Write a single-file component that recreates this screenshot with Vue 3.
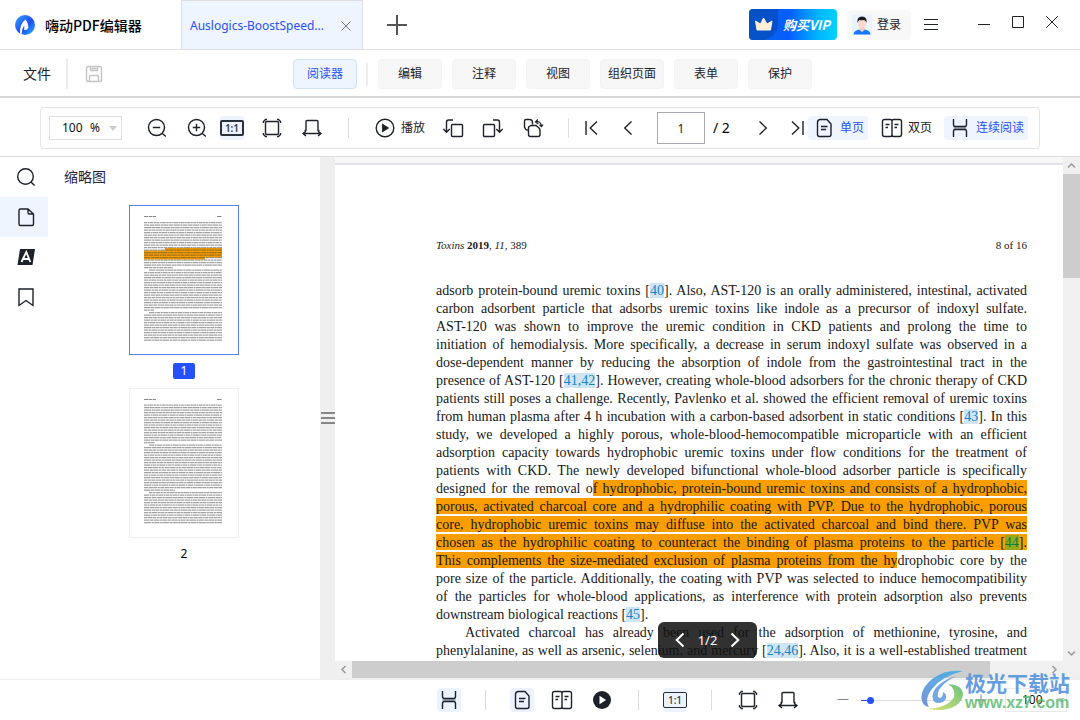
<script setup>
import { h, ref } from 'vue'

const icons = {
  zoomOut: '<circle cx="11.5" cy="11.5" r="8"/><path d="M7.8 11.5h7.4M17.4 17.4l3.4 3.2"/>',
  zoomIn: '<circle cx="11.5" cy="11.5" r="8"/><path d="M7.8 11.5h7.4M11.5 7.8v7.4M17.4 17.4l3.4 3.2"/>',
  search: '<circle cx="11.5" cy="11.5" r="7.8"/><path d="M17.2 17.2l3.4 3.4"/>',
  fitPage: '<rect x="5.5" y="5.5" width="13" height="13" rx="1.5"/><path d="M3.500 7V5.500L5.500 3.500H7M17 3.500h1.500l2 2V7M20.500 17v1.500l-2 2H17M7 20.500H5.500l-2-2V17"/>',
  fitWidth: '<path d="M4.500 14.500H5.500Q6 14.500 6 14V5.500Q6 4.500 7 4.500h10Q18 4.500 18 5.500V14Q18 14.500 18.500 14.500H19.500"/><path d="M3 17.500h18M6 15.200L3 17.500l3 2.500M18 15.200l3 2.300-3 2.500"/>',
  play: '<circle cx="12" cy="12" r="8.800"/><path d="M9.800 8.800v6.400l5.200-3.200z" fill="currentColor"/>',
  playSolid: '<circle cx="12" cy="12" r="9" fill="currentColor" stroke="none"/><path d="M10.200 9v6l4.600-3z" fill="#fff" stroke="#fff"/>',
  rotateLeft: '<rect x="10.500" y="8.500" width="11" height="12" rx="1"/><path d="M12 4H7.500Q5.500 4 5.500 6.500V16M2.300 13l3.200 3.200L8.700 13"/>',
  rotateRight: '<rect x="2.500" y="8.500" width="11" height="12" rx="1"/><path d="M12 4h4.500q2 0 2 2.500V16M15.300 13l3.200 3.200 3.200-3.200"/>',
  rotateAll: '<path d="M7 14H6Q5 14 4.500 13L3.500 11V5Q3.500 3.500 5 3.500H8.500Q11.500 3.500 11.500 6.500V8.500"/><path d="M7.500 14V11.500Q7.500 10.500 8.500 10.500L10 9.500h5l3 2.500q1 1 1 2.500v4q0 2-2 2h-7.500q-2 0-2-2z"/><path d="M14.500 6q5.500-1.500 6 4.500M16.800 3.500L14.500 6l2.800 2M18.500 8.800l2 1.900 1.600-2.200" stroke-width="1.200"/>',
  first: '<path d="M6 5v14M17 5.500L10.200 12l6.800 6.500"/>',
  prev: '<path d="M15.500 5.500L8.700 12l6.800 6.500"/>',
  next: '<path d="M8.500 5.500l6.800 6.500-6.800 6.500"/>',
  last: '<path d="M7 5.500l6.800 6.500L7 18.500M18 5v14"/>',
  single: '<path d="M8.500 3.500H15l4 4.500v10.500q0 2-2 2H7.500q-2 0-2-2v-12q0-3 3-3zM9 10.500h6.500M9 13.500h5"/>',
  double: '<path d="M12 5.500Q12 3.500 10.500 3.500H4.500q-2 0-2 2v13q0 2 2 2h6Q12 20.500 12 18.500zM12 5.500Q12 3.500 13.500 3.500h6q2 0 2 2v13q0 2-2 2h-6Q12 20.500 12 18.500M5.500 8.500h4M5.500 11.500h2.500M14.500 8.500h4M14.500 11.500h2.500"/>',
  continuous: '<path d="M5.500 11h13v2h-13z" fill="currentColor" stroke="none" opacity=".35"/><path d="M5.500 3v5.500Q5.500 10.500 7.500 10.500h9q2 0 2-2V3M5.500 21v-5.500Q5.500 13.500 7.500 13.500h9q2 0 2 2V21"/>',
  page: '<path d="M6.500 4H14l5.500 5v10q0 1.500-1.500 1.500H6.500Q5 20.500 5 19V5.500Q5 4 6.500 4zM14 4v3.500Q14 9 15.500 9h4"/>',
  letter: '<path d="M6 4h15l-2.500 16H3.500z" fill="currentColor" stroke="none"/><path d="M7.500 17L12.300 7l4 10M9.300 14h6" stroke="#fff" stroke-width="1.800"/>',
  bookmark: '<path d="M5 4h14v16.500l-7-5-7 5z"/>',
  minus: '<path d="M6.500 11.500h11"/>',
  plus: '<path d="M6.500 12h11M12 6.500v11"/>',
  menu: '<path d="M5 6.500h14M5 11.500h14M5 16.500h14" stroke-width="1.200"/>',
  save: '<rect x="4.500" y="4.500" width="15" height="15" rx="1.500"/><path d="M8.500 4.500v4h7v-4M7.500 19.500v-5q0-1 1-1h7q1 0 1 1v5M9.500 6.500h5"/>'
}
const Icon = (props) => h('svg', {
  class: 'icon', viewBox: '0 0 24 24', 'aria-hidden': 'true', innerHTML: icons[props.name]
})
Icon.props = ['name']

const ribbon = ['编辑', '注释', '视图', '组织页面', '表单', '保护']
const zoom = ref('100')
const page = ref('1')
const slider = ref(6)

// "~" switches the highlighter on or off, "[n]" is a citation
const source = [
  'adsorb protein-bound uremic toxins [40]. Also, AST-120 is an orally administered, intestinal, activated',
  'carbon adsorbent particle that adsorbs uremic toxins like indole as a precursor of indoxyl sulfate.',
  'AST-120 was shown to improve the uremic condition in CKD patients and prolong the time to',
  'initiation of hemodialysis. More specifically, a decrease in serum indoxyl sulfate was observed in a',
  'dose-dependent manner by reducing the absorption of indole from the gastrointestinal tract in the',
  'presence of AST-120 [41,42]. However, creating whole-blood adsorbers for the chronic therapy of CKD',
  'patients still poses a challenge. Recently, Pavlenko et al. showed the efficient removal of uremic toxins',
  'from human plasma after 4 h incubation with a carbon-based adsorbent in static conditions [43]. In this',
  'study, we developed a highly porous, whole-blood-hemocompatible microparticle with an efficient',
  'adsorption capacity towards hydrophobic uremic toxins under flow conditions for the treatment of',
  'patients with CKD. The newly developed bifunctional whole-blood adsorber particle is specifically',
  'designed for the removal o~f hydrophobic, protein-bound uremic toxins and consists of a hydrophobic,',
  '~porous, activated charcoal core and a hydrophilic coating with PVP. Due to the hydrophobic, porous',
  '~core, hydrophobic uremic toxins may diffuse into the activated charcoal and bind there. PVP was',
  '~chosen as the hydrophilic coating to counteract the binding of plasma proteins to the particle [44].',
  '~This complements the size-mediated exclusion of plasma proteins from the hy~drophobic core by the',
  'pore size of the particle. Additionally, the coating with PVP was selected to induce hemocompatibility',
  'of the particles for whole-blood applications, as interference with protein adsorption also prevents',
  'downstream biological reactions [45].',
  'Activated charcoal has already been used for the adsorption of methionine, tyrosine, and',
  'phenylalanine, as well as arsenic, selenium, and mercury [24,46]. Also, it is a well-established treatment'
]
const lines = source.map((text, i) => ({
  end: i === 18,
  indent: i === 19,
  runs: text.split('~').map((run, k) => ({
    marked: k % 2 === 1,
    bits: run.split(/(\d+(?:,\d+)?(?=\]))/).map((t, n) => ({ t, cite: n % 2 === 1 }))
  }))
}))

// Miniature pages: one dashed stroke per line of text
const makeRows = (count, start, shortRows, indents) => Array.from({ length: count }, (_, i) => ({
  y: start + i * 2.5,
  x1: indents.includes(i) ? 19 : 14,
  x2: shortRows[i] || 92,
  dash: `${3 + (i * 7) % 5} .5 ${1.5 + (i * 3) % 4} .4 ${4 + (i * 5) % 3} .5 2 .4`
}))
const thumbs = [
  { n: 1, active: true, rows: makeRows(48, 16.7, { 18: 43, 35: 24 }, [19, 36]) },
  { n: 2, active: false, rows: makeRows(48, 16.2, { 15: 25, 34: 45 }, [16, 35]) }
]
</script>

<template>
  <div class="app">
    <header class="titlebar">
      <div class="brand">
        <svg class="logo" viewBox="0 0 20 20" aria-hidden="true">
          <defs><linearGradient id="brandFill" x1="0" y1="0" x2="1" y2="1"><stop offset="0" stop-color="#36a5ff" /><stop offset=".55" stop-color="#1d4ff5" /><stop offset="1" stop-color="#20b8ff" /></linearGradient></defs>
          <circle cx="10" cy="10" r="10" fill="url(#brandFill)" />
          <path d="M5 18.500Q4.500 9 10.500 4.500Q13.500 8 13.500 12.500Q12.500 15.500 9 15Q9.500 12.500 9.200 10.500Q6.500 14 6.500 19.200z" fill="#fff" />
        </svg>
        <span>嗨动PDF编辑器</span>
      </div>
      <div class="filetab">
        <span>Auslogics-BoostSpeed...</span>
        <button class="bare close" aria-label="关闭标签"><svg viewBox="0 0 10 10"><path d="M.5.500l9 9M9.500.500l-9 9" /></svg></button>
      </div>
      <button class="bare newtab" aria-label="新建"><svg viewBox="0 0 20 20"><path d="M10 0v20M0 10h20" /></svg></button>
      <div class="account">
        <button class="vip">
          <svg class="crown" viewBox="0 0 30 31" aria-hidden="true">
            <path d="M0 0h29v17Q27 28 15 31H0z" fill="#0647ba" opacity=".65" />
            <path d="M6.500 12l5 3 3-6 3.500 6 5-3-1.500 9H8z" fill="#fff0d8" stroke="#fff0d8" stroke-linejoin="round" />
          </svg>
          <span>购买VIP</span>
        </button>
        <button class="login">
          <svg class="avatar" viewBox="0 0 20 20" aria-hidden="true">
            <rect width="20" height="20" fill="#eaf2ff" />
            <path d="M1.500 19.500q0-4 6-5h5q6 1 6 5z" fill="#1677ff" /><path d="M7.500 12h5v3l-2.500 2-2.500-2z" fill="#f7cdbb" />
            <ellipse cx="10" cy="8.500" rx="4" ry="5" fill="#fbd9ca" /><path d="M5.500 8Q4.500 1.500 10 1.500T14.500 8q-1-3-2.500-3-3 .5-4.500 0Q6.200 5.500 5.500 8z" fill="#1c1c22" />
          </svg>
          <span>登录</span>
        </button>
        <button class="bare" aria-label="菜单"><Icon name="menu" /></button>
      </div>
      <div class="window-buttons">
        <button class="bare" aria-label="最小化"><svg viewBox="0 0 12 12"><path d="M0 8.500h12" /></svg></button>
        <button class="bare" aria-label="最大化"><svg viewBox="0 0 12 12"><path d="M.5.500h11v11H.5z" /></svg></button>
        <button class="bare" aria-label="关闭"><svg viewBox="0 0 12 12"><path d="M.3.300l11.400 11.400M11.700.300L.3 11.700" /></svg></button>
      </div>
    </header>

    <nav class="ribbon">
      <button class="bare file">文件</button>
      <i class="rule tall"></i>
      <button class="bare save" aria-label="保存"><Icon name="save" /></button>
      <button class="tab current">阅读器</button>
      <i class="rule"></i>
      <button v-for="name in ribbon" :key="name" class="tab">{{ name }}</button>
    </nav>

    <div class="toolband">
      <div class="toolbar">
        <div class="zoombox">
          <input v-model="zoom" aria-label="缩放比例"><span>%</span><i class="caret"></i>
        </div>
        <div class="group zooms">
          <button class="bare tool" aria-label="缩小"><Icon name="zoomOut" /></button>
          <button class="bare tool" aria-label="放大"><Icon name="zoomIn" /></button>
        </div>
        <div class="group fits">
          <button class="bare tool lit" aria-label="实际大小"><span class="ratio">1:1</span></button>
          <button class="bare tool" aria-label="适合页面"><Icon name="fitPage" /></button>
          <button class="bare tool" aria-label="适合宽度"><Icon name="fitWidth" /></button>
        </div>
        <i class="sep"></i>
        <button class="bare labelled"><Icon name="play" /><span>播放</span></button>
        <div class="group turns">
          <button class="bare tool" aria-label="向左旋转"><Icon name="rotateLeft" /></button>
          <button class="bare tool" aria-label="向右旋转"><Icon name="rotateRight" /></button>
          <button class="bare tool" aria-label="旋转全部"><Icon name="rotateAll" /></button>
        </div>
        <i class="sep"></i>
        <div class="group pager">
          <button class="bare tool" aria-label="第一页"><Icon name="first" /></button>
          <button class="bare tool" aria-label="上一页"><Icon name="prev" /></button>
        </div>
        <input v-model="page" class="pagebox" aria-label="页码">
        <span class="total">/ 2</span>
        <div class="group pager forward">
          <button class="bare tool" aria-label="下一页"><Icon name="next" /></button>
          <button class="bare tool" aria-label="最后一页"><Icon name="last" /></button>
        </div>
        <button class="bare mode on"><Icon name="single" /><span>单页</span></button>
        <button class="bare mode"><Icon name="double" /><span>双页</span></button>
        <button class="bare mode on"><Icon name="continuous" /><span>连续阅读</span></button>
      </div>
    </div>

    <main class="work">
      <nav class="rail">
        <button class="bare" aria-label="搜索"><Icon name="search" /></button>
        <button class="bare chosen" aria-label="缩略图"><Icon name="page" /></button>
        <button class="bare" aria-label="注释列表"><Icon name="letter" /></button>
        <button class="bare" aria-label="书签"><Icon name="bookmark" /></button>
      </nav>
      <aside class="thumbs">
        <h2>缩略图</h2>
        <button v-for="t in thumbs" :key="t.n" class="bare thumb" :class="{ active: t.active }">
          <svg viewBox="0 0 108 148" aria-hidden="true">
            <path d="M14 10.500h12M87 10.500h5" stroke="#888" stroke-dasharray="4 .5" />
            <path v-if="t.active" d="M35 42H92v9.500H75v2H14v-9H35z" fill="#fa9e00" />
            <line v-for="(r, i) in t.rows" :key="i" :x1="r.x1" :x2="r.x2" :y1="r.y" :y2="r.y" stroke="#444" stroke-width="1.300" :stroke-dasharray="r.dash" stroke-opacity=".5" />
          </svg>
          <span>{{ t.n }}</span>
        </button>
      </aside>
      <div class="splitter"><i></i><i></i><i></i></div>
      <section class="viewer">
        <div class="column">
          <article class="sheet">
            <div class="running"><span><em>Toxins</em> <b>2019</b>, <em>11</em>, 389</span><span>8 of 16</span></div>
            <div class="body">
              <div v-for="(l, i) in lines" :key="i" class="line" :class="{ end: l.end, indent: l.indent }"><span v-for="(r, k) in l.runs" :key="k" :class="{ marked: r.marked }"><template v-for="(b, n) in r.bits" :key="n"><a v-if="b.cite" href="#" class="cite">{{ b.t }}</a><template v-else>{{ b.t }}</template></template></span></div>
            </div>
          </article>
          <div class="floater">
            <button class="bare" aria-label="上一页"><Icon name="prev" /></button>
            <span>1/2</span>
            <button class="bare" aria-label="下一页"><Icon name="next" /></button>
          </div>
          <div class="hbar">
            <svg viewBox="0 0 17 17"><path d="M10.500 5L7 8.500l3.500 3.500" /></svg>
            <div class="track"><i></i></div>
            <svg viewBox="0 0 17 17"><path d="M6.500 5L10 8.500 6.500 12" /></svg>
          </div>
        </div>
        <div class="vbar">
          <svg viewBox="0 0 17 17"><path d="M5 10.500L8.500 7l3.500 3.500" /></svg>
          <i></i>
          <svg class="down" viewBox="0 0 17 17"><path d="M5 6.500L8.500 10 12 6.500" /></svg>
        </div>
      </section>
    </main>

    <footer class="status">
      <button class="bare tool lit" aria-label="连续阅读"><Icon name="continuous" /></button>
      <i class="sep"></i>
      <div class="group">
        <button class="bare tool lit" aria-label="单页"><Icon name="single" /></button>
        <button class="bare tool" aria-label="双页"><Icon name="double" /></button>
        <button class="bare tool" aria-label="播放"><Icon name="playSolid" /></button>
      </div>
      <i class="sep"></i>
      <button class="bare tool lit" aria-label="实际大小"><span class="ratio thin">1:1</span></button>
      <i class="sep"></i>
      <div class="group">
        <button class="bare tool" aria-label="适合页面"><Icon name="fitPage" /></button>
        <button class="bare tool" aria-label="适合宽度"><Icon name="fitWidth" /></button>
      </div>
      <div class="sliding">
        <button class="bare tool" aria-label="缩小"><Icon name="minus" /></button>
        <input v-model="slider" type="range" min="0" max="100" aria-label="缩放">
        <button class="bare tool" aria-label="放大"><Icon name="plus" /></button>
      </div>
      <div class="zoombox low"><input v-model="zoom" aria-label="缩放数值"><i class="caret"></i></div>
    </footer>

    <div class="stamp">
      <svg viewBox="0 0 44 42" aria-hidden="true">
        <defs>
          <linearGradient id="swirlBlue" x1="1" y1="0" x2="0" y2="1"><stop offset="0" stop-color="#35b0ea" /><stop offset="1" stop-color="#5b83d0" /></linearGradient>
          <linearGradient id="swirlGreen" x1="1" y1="0" x2="0" y2="1"><stop offset="0" stop-color="#4fb86a" /><stop offset="1" stop-color="#d5df5a" /></linearGradient>
        </defs>
        <path d="M42 1Q24-1 11 9-2 20 1 31q1 5 7 6-5-8 3-18Q21 6 42 1z" fill="url(#swirlBlue)" />
        <path d="M35 6Q16 12 12 23q-2 8 4 10 8 0 9-5 1-4-3-6 0 5-3 6-4-1-1-8Q23 12 35 6z" fill="#5b9bdd" />
        <path d="M27 14q15 1 15 11Q40 37 22 40q-9 0-17-1 22-1 28-12 2-8-6-13z" fill="url(#swirlGreen)" />
      </svg>
      <div><strong>极光下载站</strong><b>www.xz7.com</b></div>
    </div>
  </div>
</template>

<style>
body { margin: 0; overflow: hidden; }
</style>

<style scoped>
.app { position: relative; display: flex; flex-direction: column; height: 100vh; background: #fff; color: #1d2129; font: 12px/18px "Noto Sans", "Noto Sans CJK SC", sans-serif; box-sizing: border-box; }
.app * { box-sizing: border-box; }
button, input { font: inherit; color: inherit; }
button { white-space: nowrap; }
.bare { border: 0; background: none; padding: 0; display: flex; align-items: center; justify-content: center; flex: none; }
svg { display: block; flex: none; fill: none; stroke-width: 1; }
.icon { width: 24px; height: 24px; stroke: currentColor; stroke-width: 1.4; }

.titlebar { display: flex; align-items: stretch; height: 50px; flex: none; border-bottom: 1px solid #dfdfe1; }
.brand { width: 181px; flex: none; display: flex; align-items: center; gap: 10px; padding-left: 15px; color: #000; font: 500 14px/20px "Noto Sans CJK SC", sans-serif; }
.logo { width: 20px; height: 20px; }
.filetab { width: 182px; flex: none; display: flex; align-items: center; justify-content: space-between; padding: 2px 11px 0 8px; background: #eef5ff; border: solid #dddde2; border-width: 1px 1px 0; color: #2b50f5; font-size: 12px; }
.close svg { width: 10px; height: 10px; stroke: #777; }
.newtab { width: 68px; }
.newtab svg { width: 20px; height: 20px; stroke: #555; stroke-width: 2; }
.account { margin-left: auto; display: flex; align-items: center; gap: 8px; }
.vip { width: 88px; height: 31px; border: 0; padding: 0; border-radius: 4px; overflow: hidden; display: flex; align-items: center; gap: 4px; margin-right: 2px; background: linear-gradient(90deg, #0568d8, #075dff 45%, #00b8ff 80%, #05d0ff); color: #fff; font: italic 700 13px/20px "Noto Sans CJK SC", sans-serif; }
.crown { width: 30px; height: 31px; }
.login { width: 64px; height: 30px; border: 0; padding: 0 0 0 5px; border-radius: 4px; background: #f8f8f8; display: flex; align-items: center; gap: 5px; }
.avatar { width: 20px; height: 20px; }
.window-buttons { display: flex; align-items: center; gap: 22px; margin: 0 22px 6px 35px; }
.window-buttons svg { width: 12px; height: 12px; stroke: #222; }

.ribbon { display: flex; align-items: center; flex: none; height: 48px; padding-top: 2px; border-bottom: 2px solid #d8d8d8; }
.file { margin-left: 23px; font-size: 14px; }
.rule { width: 2px; height: 23px; background: #ececec; margin: 0 10px 0 9px; }
.rule.tall { height: 30px; margin: 0 14px 0 15px; }
.save { color: #c4c4c4; margin-right: 187px; }
.tab { width: 64px; height: 30px; padding: 0; border: 1px solid #f3f3f3; border-radius: 4px; background: #f7f7f7; }
.tab + .tab { margin-left: 10px; }
.current { background: #eef5ff; border-color: #cfe2fb; color: #2b50f5; }

.toolband { flex: none; padding: 9px 40px 7px; border-bottom: 1px solid #dcdcde; }
.toolbar { display: flex; align-items: center; height: 42px; padding-left: 8px; border: 1px solid #e4e4e6; border-radius: 4px; }
.zoombox { display: flex; align-items: center; width: 73px; height: 24px; border: 1px solid #dedede; flex: none; color: #111; }
.zoombox input { width: 40px; padding: 0 0 0 12px; border: 0; background: none; outline: none; }
.caret { margin-left: 9px; border: 4px solid transparent; border-top: 5px solid #ccc; border-bottom: 0; }
.group { display: flex; gap: 16px; }
.tool { width: 24px; height: 24px; }
.lit { background: #eaf3ff; border-radius: 4px; }
.ratio { flex: none; width: 24px; height: 16px; border: 2px solid #28313b; border-radius: 2px; font: 600 10px/12px "Noto Sans", sans-serif; color: #333b45; }
.thin { border-width: 1px; line-height: 14px; font-weight: 500; }
.zooms { margin-left: 23px; }
.fits { margin-left: 11px; }
.sep { width: 1px; height: 20px; flex: none; margin: 0 24px; background: #dcdce0; }
.labelled { gap: 4px; }
.turns { margin-left: 16px; }
.turns + .sep { margin: 0 11px 0 23px; }
.pager { gap: 12px; }
.pagebox { width: 48px; height: 32px; margin: 0 8px 0 17px; padding: 0; border: 1px solid #a9a9b2; text-align: center; outline: none; }
.total { width: 38px; font-size: 14px; color: #000; }
.forward { gap: 11px; }
.forward .tool:last-child { width: 22px; }
.mode { height: 24px; gap: 4px; padding: 0 4px; border-radius: 4px; }
.mode + .mode { margin-left: 8px; }
.on { background: #eef5ff; }
.on span { color: #2b50f5; }

.work { flex: 1; min-height: 0; display: flex; }
.rail { width: 48px; flex: none; }
.rail .bare { width: 100%; height: 40px; padding-left: 4px; }
.rail .chosen { background: #eef5ff; }
.thumbs { width: 272px; flex: none; }
h2 { margin: 10px 0 18px 16px; font-weight: 400; font-size: 14px; line-height: 20px; color: #26233f; }
.thumb { flex-direction: column; margin: 0 auto 9px; color: #000; }
.thumb svg { width: 110px; height: 150px; border: 1px solid #eee; }
.thumb.active svg { border-color: #5b7cf5; }
.thumb span { min-width: 22px; margin-top: 8px; line-height: 16px; border-radius: 2px; }
.active span { background: #2451fb; color: #fff; }
.splitter { width: 15px; flex: none; background: #efefef; display: flex; flex-direction: column; justify-content: center; gap: 3px; }
.splitter i { height: 2px; margin: 0 0 0 1px; background: #888; }
.viewer { flex: 1; min-width: 0; display: flex; }
.column { position: relative; flex: 1; min-width: 0; display: flex; flex-direction: column; border-top: 6px solid #f7f7f8; }
.sheet { flex: 1; min-height: 0; overflow: hidden; border-top: 2px solid #e1e1e9; padding: 72px 36px 0 101px; color: #181818; font: 14px/18px Palatino, "Palatino Linotype", "Liberation Serif", serif; }
.running { display: flex; justify-content: space-between; font-size: 11px; line-height: 16px; }
.body { margin-top: 29px; }
.line { text-align: justify; text-align-last: justify; white-space: nowrap; }
.line.end { text-align-last: left; }
.indent { padding-left: 29px; }
.marked { background: #fa9e00; padding: 1px 0 0; }
.cite { background: #cfe5f4; color: #1683c4; text-decoration: none; }
.marked .cite { background: #96a91e; color: #077d3c; }
.floater { position: absolute; left: 323px; bottom: 21px; width: 99px; height: 36px; display: flex; align-items: center; justify-content: center; gap: 6px; border-radius: 6px; background: rgba(18, 18, 18, .87); color: #fff; font-size: 13px; }
.floater .icon { stroke-width: 2; }
.floater .bare { width: 24px; }
.hbar { height: 18px; flex: none; display: flex; background: #f0f0f0; }
.hbar svg, .vbar svg { width: 17px; height: 17px; stroke: #999; stroke-width: 1.5; }
.track { flex: 1; }
.track i { display: block; width: 92%; height: 17px; background: #cdcdcd; }
.vbar { width: 17px; flex: none; display: flex; flex-direction: column; background: #f0f0f0; }
.vbar i { height: 20%; background: #cdcdcd; }
.vbar .down { margin: auto 0 17px; }

.status { flex: none; height: 41px; display: flex; align-items: center; justify-content: flex-end; padding-right: 13px; border-top: 1px solid #eee; }
.sliding { display: flex; align-items: center; gap: 6px; margin: 0 12px 0 31px; }
.sliding .icon { stroke: #888; stroke-width: 1; }
input[type="range"] { appearance: none; width: 102px; height: 8px; margin: 0; background: linear-gradient(90deg, #2451fb 6%, #dedee4 6%) center / 100% 1px no-repeat; }
input[type="range"]::-webkit-slider-thumb { appearance: none; width: 7px; height: 7px; border-radius: 50%; background: #2451fb; }
.low { width: 62px; border-color: #eaeaea; }
.low input { width: 42px; padding-left: 16px; }

.stamp { position: absolute; right: 10px; bottom: 8px; display: flex; align-items: center; pointer-events: none; opacity: .85; }
.stamp svg { width: 44px; height: 42px; }
.stamp div { display: flex; flex-direction: column; }
.stamp strong { color: #4b8fda; font: 700 21px/23px "Noto Sans CJK SC", sans-serif; }
.stamp b { color: #5dbb72; font: 700 16px/18px "Liberation Sans", sans-serif; }
</style>
